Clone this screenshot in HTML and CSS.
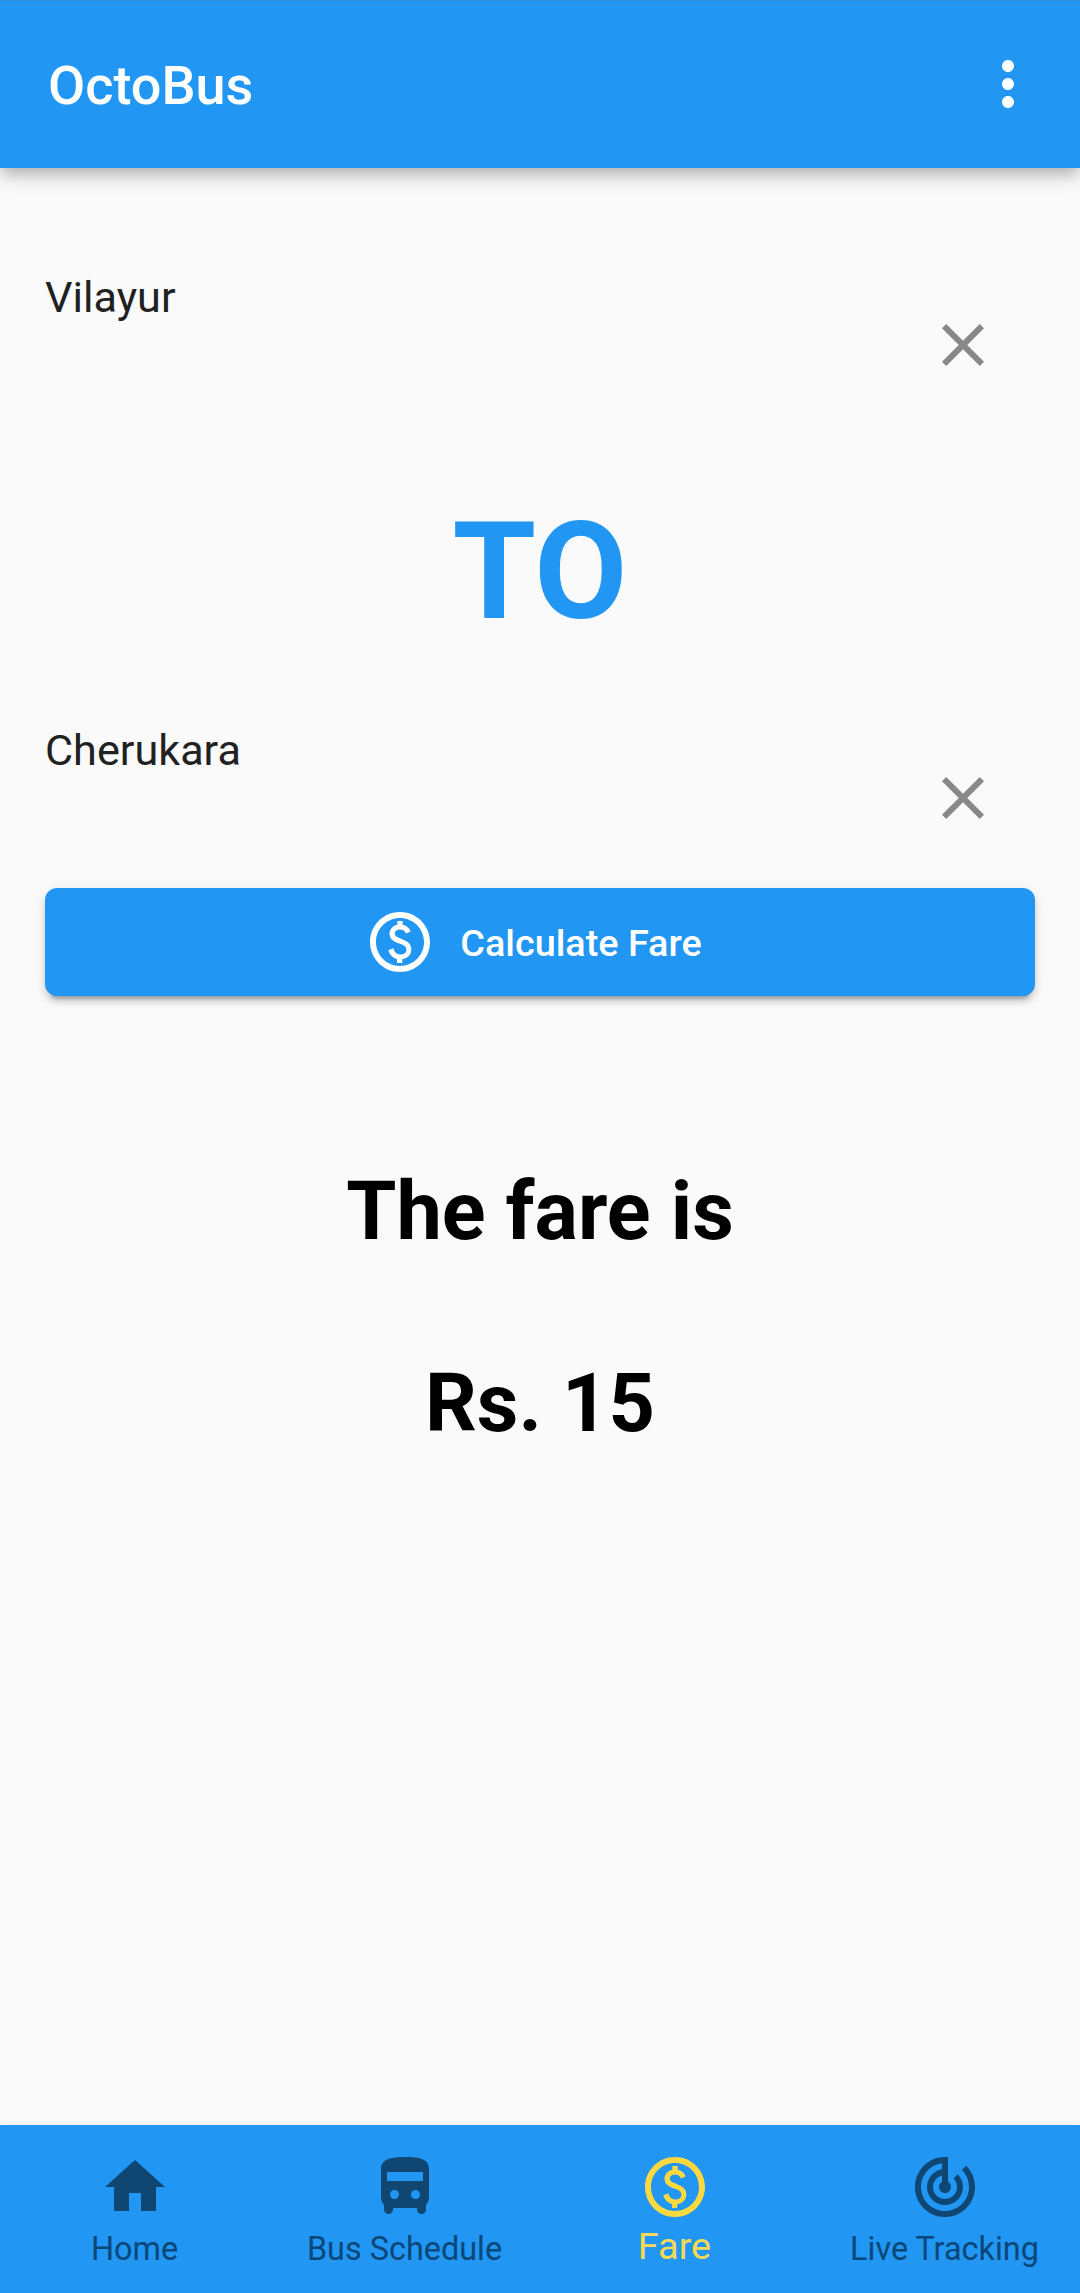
FILE: index.html
```html
<!DOCTYPE html>
<html lang="en">
<head>
<meta charset="utf-8">
<title>OctoBus</title>
<link rel="stylesheet" href="styles.css">
</head>
<body>
<div class="app">
  <header class="app-bar">
    <h1 class="app-title">OctoBus</h1>
    <svg class="icon" viewBox="0 0 24 24"><path d="M12 8c1.1 0 2-.9 2-2s-.9-2-2-2-2 .9-2 2 .9 2 2 2zm0 2c-1.1 0-2 .9-2 2s.9 2 2 2 2-.9 2-2-.9-2-2-2zm0 6c-1.1 0-2 .9-2 2s.9 2 2 2 2-.9 2-2-.9-2-2-2z"/></svg>
  </header>

  <main class="content">
    <div class="stop">
      <span class="stop-name">Vilayur</span>
      <svg class="icon clear" viewBox="0 0 24 24"><path d="M19 6.41L17.59 5 12 10.59 6.41 5 5 6.41 10.59 12 5 17.59 6.41 19 12 13.41 17.59 19 19 17.59 13.41 12z"/></svg>
    </div>
    <div class="to">TO</div>
    <div class="stop">
      <span class="stop-name">Cherukara</span>
      <svg class="icon clear" viewBox="0 0 24 24"><path d="M19 6.41L17.59 5 12 10.59 6.41 5 5 6.41 10.59 12 5 17.59 6.41 19 12 13.41 17.59 19 19 17.59 13.41 12z"/></svg>
    </div>
    <button class="calculate" type="button">
      <svg class="icon" viewBox="0 0 24 24"><path d="M12 2C6.48 2 2 6.48 2 12s4.48 10 10 10 10-4.48 10-10S17.52 2 12 2zm0 18c-4.41 0-8-3.59-8-8s3.59-8 8-8 8 3.59 8 8-3.59 8-8 8zm.89-8.9c-1.78-.59-2.64-.96-2.64-1.9 0-1.02 1.11-1.39 1.81-1.39 1.31 0 1.79.99 1.9 1.34l1.58-.67c-.15-.44-.82-1.91-2.66-2.23V5h-1.75v1.26c-2.6.56-2.62 2.85-2.62 2.96 0 2.27 2.25 2.91 3.35 3.31 1.58.56 2.28 1.07 2.28 2.03 0 1.13-1.05 1.61-1.98 1.61-1.82 0-2.34-1.87-2.4-2.09l-1.66.67c.63 2.19 2.28 2.78 2.9 2.96V19h1.75v-1.24c.52-.09 3.02-.59 3.02-3.22 0-1.39-.61-2.61-3.22-3.44z"/></svg>
      <span class="calculate-label">Calculate Fare</span>
    </button>
    <div class="result">The fare is</div>
    <div class="result">Rs. 15</div>
  </main>

  <nav class="bottom-nav">
    <a class="nav-item">
      <svg class="icon" viewBox="0 0 24 24"><path d="M10 20v-6h4v6h5v-8h3L12 3 2 12h3v8z"/></svg>
      <span class="nav-label">Home</span>
    </a>
    <a class="nav-item">
      <svg class="icon" viewBox="0 0 24 24"><path fill-rule="evenodd" d="M12 2C8 2 4 2.5 4 6v9.5c0 .95.38 1.81 1 2.44v1.56c0 .83.67 1.5 1.5 1.5S8 20.33 8 19.5V19h8v.5c0 .82.67 1.5 1.5 1.5.82 0 1.5-.67 1.5-1.5v-1.56c.62-.63 1-1.49 1-2.44V6c0-3.5-3.58-4-8-4zM8.5 16c-.83 0-1.5-.67-1.5-1.5S7.67 13 8.5 13s1.5.67 1.5 1.5S9.33 16 8.5 16zm7 0c-.83 0-1.5-.67-1.5-1.5s.67-1.5 1.5-1.5 1.5.67 1.5 1.5-.67 1.5-1.5 1.5zM18 10H6V7h12v3z"/></svg>
      <span class="nav-label">Bus Schedule</span>
    </a>
    <a class="nav-item selected">
      <svg class="icon" viewBox="0 0 24 24"><path d="M12 2C6.48 2 2 6.48 2 12s4.48 10 10 10 10-4.48 10-10S17.52 2 12 2zm0 18c-4.41 0-8-3.59-8-8s3.59-8 8-8 8 3.59 8 8-3.59 8-8 8zm.89-8.9c-1.78-.59-2.64-.96-2.64-1.9 0-1.02 1.11-1.39 1.81-1.39 1.31 0 1.79.99 1.9 1.34l1.58-.67c-.15-.44-.82-1.91-2.66-2.23V5h-1.75v1.26c-2.6.56-2.62 2.85-2.62 2.96 0 2.27 2.25 2.91 3.35 3.31 1.58.56 2.28 1.07 2.28 2.03 0 1.13-1.05 1.61-1.98 1.61-1.82 0-2.34-1.87-2.4-2.09l-1.66.67c.63 2.19 2.28 2.78 2.9 2.96V19h1.75v-1.24c.52-.09 3.02-.59 3.02-3.22 0-1.39-.61-2.61-3.22-3.44z"/></svg>
      <span class="nav-label">Fare</span>
    </a>
    <a class="nav-item">
      <svg class="icon" viewBox="0 0 24 24"><path d="M19.07 4.93l-1.41 1.41C19.1 7.79 20 9.79 20 12c0 4.42-3.58 8-8 8s-8-3.58-8-8c0-4.08 3.05-7.44 7-7.93v2.02C8.16 6.57 6 9.03 6 12c0 3.31 2.69 6 6 6s6-2.69 6-6c0-1.66-.67-3.16-1.76-4.24l-1.41 1.41C15.55 9.9 16 10.9 16 12c0 2.21-1.79 4-4 4s-4-1.79-4-4c0-1.86 1.28-3.41 3-3.86v2.14c-.6.35-1 .98-1 1.72 0 1.1.9 2 2 2s2-.9 2-2c0-.74-.4-1.38-1-1.72V2h-1C6.48 2 2 6.48 2 12s4.48 10 10 10 10-4.48 10-10c0-2.76-1.12-5.26-2.93-7.07z"/></svg>
      <span class="nav-label">Live Tracking</span>
    </a>
  </nav>
</div>
</body>
</html>
```
FILE: styles.css
```css
* {
  box-sizing: border-box;
}

body {
  margin: 0;
  background: #fafafa;
  font-family: Roboto, sans-serif;
}

.app {
  display: flex;
  flex-direction: column;
  height: 2293px;
}

.icon {
  display: block;
  flex: none;
  width: 72px;
  height: 72px;
  fill: currentColor;
}

.app-bar {
  display: flex;
  flex: none;
  align-items: center;
  justify-content: space-between;
  height: 168px;
  padding: 0 36px 1px 48px;
  border-top: 1px solid #2b8fdf;
  background: #2196f3;
  color: #fff;
  box-shadow: 0 6px 12px -3px rgba(0, 0, 0, .2), 0 12px 15px rgba(0, 0, 0, .1), 0 3px 30px rgba(0, 0, 0, .06);
}

.app-title {
  margin: 0;
  padding-top: 2px;
  font-size: 54px;
  font-weight: 500;
  line-height: 63px;
}

.content {
  display: flex;
  flex: 1;
  flex-direction: column;
  padding: 104px 45px 0;
}

.stop {
  display: flex;
  align-items: flex-start;
  justify-content: space-between;
  height: 132px;
  padding-right: 36px;
}

.stop-name {
  color: #212121;
  font-size: 43.2px;
  line-height: 51px;
}

.clear {
  margin-top: 37px;
  color: #888;
}

.to {
  height: 321px;
  padding-top: 89px;
  color: #2196f3;
  font-size: 135px;
  font-weight: 700;
  line-height: 158px;
  text-align: center;
}

.calculate {
  display: flex;
  flex: none;
  align-items: center;
  justify-content: center;
  gap: 24px;
  height: 108px;
  margin: 31px 0 149px;
  padding: 0 14px 0 0;
  border: 0;
  border-radius: 12px;
  background: #2196f3;
  color: #fff;
  font-family: inherit;
  box-shadow: 0 9px 3px -6px rgba(0, 0, 0, .2), 0 6px 6px rgba(0, 0, 0, .14), 0 3px 15px rgba(0, 0, 0, .08);
}

.calculate-label {
  padding-top: 2px;
  font-size: 37.8px;
  font-weight: 500;
  line-height: 44px;
}

.result {
  height: 192px;
  padding-top: 19px;
  color: #000;
  font-size: 81px;
  font-weight: 700;
  line-height: 95px;
  text-align: center;
}

.bottom-nav {
  display: grid;
  flex: none;
  grid-template-columns: repeat(4, 1fr);
  height: 168px;
  background: #2196f3;
  box-shadow: 0 0 12px rgba(0, 0, 0, .06);
}

.nav-item {
  display: flex;
  flex-direction: column;
  align-items: center;
  padding-top: 26px;
  color: #0f4672;
}

.nav-label {
  margin-top: 7px;
  padding-right: 1px;
  color: #0a4779;
  font-size: 32.4px;
  line-height: 38px;
  white-space: nowrap;
}

.selected {
  color: #fdd83f;
}

.selected .nav-label {
  margin-top: 1px;
  color: #f6d954;
  font-size: 37.8px;
  line-height: 44px;
}
```
